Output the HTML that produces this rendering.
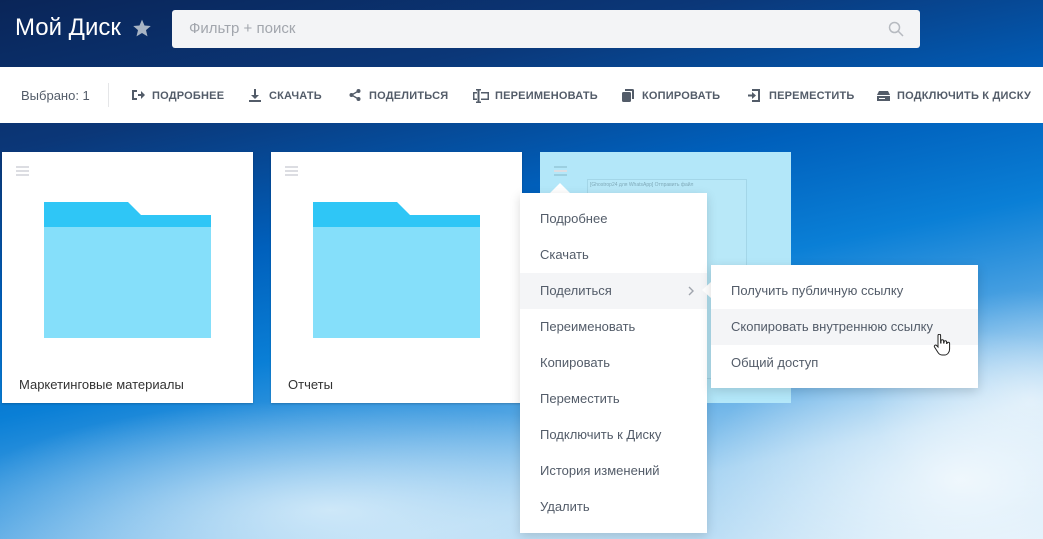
<!DOCTYPE html>
<html><head><meta charset="utf-8"><style>
*{margin:0;padding:0;box-sizing:border-box}
body{width:1043px;height:539px;overflow:hidden;position:relative;font-family:"Liberation Sans","Noto Sans CJK SC",sans-serif;
background:
radial-gradient(ellipse 260px 150px at 960px 480px,rgba(255,255,255,.75),rgba(255,255,255,0)),
radial-gradient(ellipse 160px 110px at 1030px 400px,rgba(255,255,255,.55),rgba(255,255,255,0)),
radial-gradient(ellipse 380px 110px at 330px 510px,rgba(225,242,252,.8),rgba(225,242,252,0)),
linear-gradient(168deg,#0a2558 0%,#0b3778 20%,#0060bc 40%,#0a7fd6 55%,#4ca2e2 68%,#a6d3f2 82%,#d6ebf9 100%);}
.top{position:absolute;left:15px;top:14px;color:#fff;font-size:24px}
.star{position:absolute;left:132px;top:18px}
.search{position:absolute;left:172px;top:10px;width:748px;height:38px;background:#f3f4f6;border-radius:3px;color:#a2a6ad;font-size:15px;padding:10px 17px}
.tb{position:absolute;left:0;top:67px;width:1043px;height:56px;background:#fff;font-size:11px}
.tb span{position:absolute;top:23px;font-weight:bold;color:#535c69;letter-spacing:0.2px;white-space:nowrap}
.tb svg{position:absolute;top:22px}
.card{position:absolute;top:152px;width:251px;height:251px;background:#fff;box-shadow:0 1px 2px rgba(0,0,0,.2)}
.ham{position:absolute;left:14px;top:14px;width:13px;height:10px;border-top:2px solid #dcdde2;border-bottom:2px solid #dcdde2}
.ham:after{content:"";position:absolute;left:0;right:0;top:2px;height:2px;background:#dcdde2}
.fold{position:absolute;left:42px;top:50px}
.name{position:absolute;left:17px;top:225px;font-size:13px;color:#333}
.menu{position:absolute;background:#fff;box-shadow:0 3px 10px rgba(0,0,0,.15);font-size:13px;color:#535c69}
.menu div{height:36px;line-height:36px;padding-left:20px;position:relative}
.hl{background:#f4f5f7}
</style></head><body>
<div class="top">Мой Диск</div>
<svg class="star" width="20" height="20" viewBox="0 0 24 24"><path d="M12 2l3 7 7.5.6-5.7 5 1.8 7.4L12 18l-6.6 4 1.8-7.4-5.7-5L9 9z" fill="#a8b4c4"/></svg>
<div class="search">Фильтр + поиск</div>
<svg style="position:absolute;left:888px;top:21px" width="16" height="16" viewBox="0 0 16 16"><circle cx="6.5" cy="6.5" r="5" fill="none" stroke="#b6bac0" stroke-width="1.5"/><path d="M10 10l5 5" stroke="#b6bac0" stroke-width="1.5"/></svg>
<div class="tb">
<span style="left:21px;font-weight:normal;font-size:13px;top:21px;letter-spacing:0">Выбрано: 1</span>
<div style="position:absolute;left:108px;top:16px;width:1px;height:24px;background:#e5e6e8"></div>
<svg style="left:131px" width="14" height="12" viewBox="0 0 14 12"><path d="M1 1h5v2H3v6h3v2H1z M7 5h3V2l4 4-4 4V7H7z" fill="#535c69"/></svg><span style="left:152px">ПОДРОБНЕЕ</span>
<svg style="left:249px" width="12" height="13" viewBox="0 0 12 13"><path d="M5 0h2v6h3l-4 4-4-4h3z M0 11h12v2H0z" fill="#535c69"/></svg><span style="left:269px">СКАЧАТЬ</span>
<svg style="left:349px" width="12" height="12" viewBox="0 0 12 12"><circle cx="9.5" cy="2" r="2" fill="#535c69"/><circle cx="2.5" cy="6" r="2" fill="#535c69"/><circle cx="9.5" cy="10" r="2" fill="#535c69"/><path d="M9.5 2L2.5 6l7 4" stroke="#535c69" stroke-width="1.3" fill="none"/></svg><span style="left:369px">ПОДЕЛИТЬСЯ</span>
<svg style="left:473px" width="16" height="14" viewBox="0 0 16 14"><path d="M3 0h5v1.5H6.5v11H8V14H3v-1.5h1.5v-11H3z M8 3h8v8H8V9.5h6.5v-5H8z M0 3h4v1.5H1.5v5H4V11H0z" fill="#535c69"/></svg><span style="left:495px">ПЕРЕИМЕНОВАТЬ</span>
<svg style="left:622px" width="12" height="13" viewBox="0 0 12 13"><rect x="0" y="3" width="9" height="10" rx="1.5" fill="#535c69"/><path d="M3 0h7.5A1.5 1.5 0 0 1 12 1.5V10h-2V2H3z" fill="#535c69"/></svg><span style="left:642px">КОПИРОВАТЬ</span>
<svg style="left:748px" width="12" height="13" viewBox="0 0 12 13"><path d="M4 0h8v13H4v-2h6V2H4z M0 5.5h4V3l4 3.5L4 10V7.5H0z" fill="#535c69"/></svg><span style="left:769px">ПЕРЕМЕСТИТЬ</span>
<svg style="left:877px;top:24px" width="13" height="10" viewBox="0 0 13 10"><path d="M2 0h9l2 4H0z M0 5h13v5H0z" fill="#535c69"/><rect x="2" y="7" width="6" height="1" fill="#fff"/></svg><span style="left:897px">ПОДКЛЮЧИТЬ К ДИСКУ</span>
</div>

<div class="card" style="left:2px"><div class="ham"></div>
<svg class="fold" width="167" height="136" viewBox="0 0 167 136"><path d="M0 0h84l13 13h70v136H0z" fill="#2fc6f6"/><rect x="0" y="25" width="167" height="111" fill="#85dffa"/></svg>
<div class="name">Маркетинговые материалы</div></div>
<div class="card" style="left:271px"><div class="ham"></div>
<svg class="fold" width="167" height="136" viewBox="0 0 167 136"><path d="M0 0h84l13 13h70v136H0z" fill="#2fc6f6"/><rect x="0" y="25" width="167" height="111" fill="#85dffa"/></svg>
<div class="name">Отчеты</div></div>
<div class="card" style="left:540px;background:#b3e7f9;box-shadow:none"><div class="ham" style="border-color:#9ccfe0"></div>
<div style="position:absolute;left:47px;top:27px;width:160px;height:200px;border:1px solid #a3d6e8;background:#b8e8f8"></div>
<div style="position:absolute;left:50px;top:30px;font-size:5px;color:#7fa9b8">[Ghostrop24 для WhatsApp] Отправить файл</div>
<div style="position:absolute;left:160px;top:225px;font-size:13px;color:#5a7680">g</div></div>

<div style="position:absolute;left:550px;top:183px;width:0;height:0;border-left:10px solid transparent;border-right:10px solid transparent;border-bottom:10px solid #fff"></div>
<div class="menu" style="left:520px;top:193px;width:187px;height:340px;padding-top:8px">
<div>Подробнее</div><div>Скачать</div><div class="hl">Поделиться<svg style="position:absolute;left:168px;top:13px" width="6" height="10" viewBox="0 0 6 10"><path d="M1 1l4 4-4 4" stroke="#a0a5ad" stroke-width="1.4" fill="none"/></svg></div><div>Переименовать</div><div>Копировать</div><div>Переместить</div><div>Подключить к Диску</div><div>История изменений</div><div>Удалить</div>
</div>
<div style="position:absolute;left:702px;top:282px;width:0;height:0;border-top:8px solid transparent;border-bottom:8px solid transparent;border-right:9px solid #fff"></div>
<div class="menu" style="left:711px;top:265px;width:267px;height:123px;padding-top:8px">
<div>Получить публичную ссылку</div><div class="hl">Скопировать внутреннюю ссылку</div><div>Общий доступ</div>
</div>
<svg style="position:absolute;left:933px;top:334px" width="18" height="22" viewBox="0 0 18 22"><path d="M5 1.5a1.3 1.3 0 0 1 2.6 0V9h.4V7a1.3 1.3 0 0 1 2.6 0v2h.4V8a1.3 1.3 0 0 1 2.6 0v1.5h.4a1.3 1.3 0 0 1 2.6 0V15c0 3-2 6-5 6H9c-2 0-3-1-4-2.5L1.5 13a1.3 1.3 0 0 1 2-1.6L5 13z" fill="#fff" stroke="#222" stroke-width="1"/></svg>
</body></html>
